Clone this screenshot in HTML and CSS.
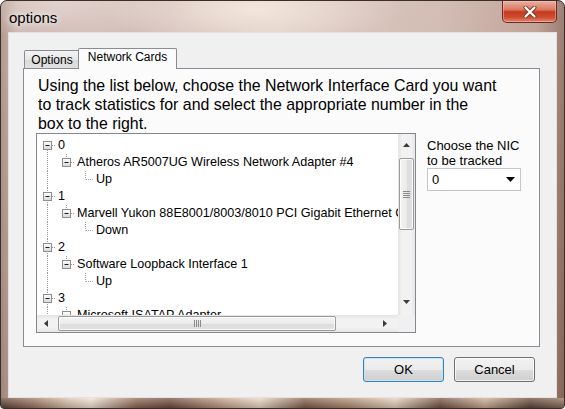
FILE: index.html
```html
<!DOCTYPE html>
<html lang="en">

<head>
    <meta charset="UTF-8">
    <title>options</title>
    <link rel="stylesheet" href="styles.css">
</head>

<body>
    <!-- tree line pieces, reused by every row -->
    <svg class="defs" width="0" height="0">
        <defs>
            <linearGradient id="box-fill" x1="0" y1="0" x2="0" y2="1">
                <stop offset="0" stop-color="#ffffff"/>
                <stop offset="1" stop-color="#d6d6d6"/>
            </linearGradient>
            <symbol id="box" viewBox="0 0 19 17">
                <rect x="6.5" y="4.5" width="8" height="8" fill="url(#box-fill)" stroke="#8c8e91"/>
                <path d="M8.5 8.5h4" stroke="#1f1f1f"/>
            </symbol>
            <symbol id="v" viewBox="0 0 19 17">
                <path class="dots" d="M10.5 0V17"/>
            </symbol>
            <symbol id="l" viewBox="0 0 19 17">
                <path class="dots" d="M10.5 0V8.5M11 8.5H19"/>
            </symbol>
            <symbol id="first" viewBox="0 0 19 17">
                <path class="dots" d="M10.5 9V17M11 8.5H19"/>
                <use href="#box"/>
            </symbol>
            <symbol id="tee" viewBox="0 0 19 17">
                <path class="dots" d="M10.5 0V17M11 8.5H19"/>
                <use href="#box"/>
            </symbol>
            <symbol id="last" viewBox="0 0 19 17">
                <path class="dots" d="M10.5 0V8.5M11 8.5H19"/>
                <use href="#box"/>
            </symbol>
        </defs>
    </svg>

    <div class="window">
        <div class="titlebar">
            <div class="title">options</div>
            <div class="close">
                <svg width="14" height="12" viewBox="0 0 14 12">
                    <path d="M2.5 1.5L11.5 10.5M11.5 1.5L2.5 10.5" stroke="#7a3a2e" stroke-width="4" stroke-linecap="round"/>
                    <path d="M2.5 1.5L11.5 10.5M11.5 1.5L2.5 10.5" stroke="#ffffff" stroke-width="2.2" stroke-linecap="round"/>
                </svg>
            </div>
        </div>

        <div class="client">
            <div class="tabs">
                <div class="tab">Options</div>
                <div class="tab active">Network Cards</div>
            </div>

            <div class="panel">
                <p class="intro">
                    Using the list below, choose the Network Interface Card you want<br>
                    to track statistics for and select the appropriate number in the<br>
                    box to the right.
                </p>

                <div class="nic-row">
                    <div class="tree">
                        <div class="tree-items">
                            <div class="node"><svg class="gl"><use href="#first"/></svg><span class="label">0</span></div>
                            <div class="node"><svg class="gl"><use href="#v"/></svg><svg class="gl"><use href="#last"/></svg><span class="label">Atheros AR5007UG Wireless Network Adapter #4</span></div>
                            <div class="node"><svg class="gl"><use href="#v"/></svg><span class="gap"></span><svg class="gl"><use href="#l"/></svg><span class="label">Up</span></div>
                            <div class="node"><svg class="gl"><use href="#tee"/></svg><span class="label">1</span></div>
                            <div class="node"><svg class="gl"><use href="#v"/></svg><svg class="gl"><use href="#last"/></svg><span class="label">Marvell Yukon 88E8001/8003/8010 PCI Gigabit Ethernet Controller</span></div>
                            <div class="node"><svg class="gl"><use href="#v"/></svg><span class="gap"></span><svg class="gl"><use href="#l"/></svg><span class="label">Down</span></div>
                            <div class="node"><svg class="gl"><use href="#tee"/></svg><span class="label">2</span></div>
                            <div class="node"><svg class="gl"><use href="#v"/></svg><svg class="gl"><use href="#last"/></svg><span class="label">Software Loopback Interface 1</span></div>
                            <div class="node"><svg class="gl"><use href="#v"/></svg><span class="gap"></span><svg class="gl"><use href="#l"/></svg><span class="label">Up</span></div>
                            <div class="node"><svg class="gl"><use href="#tee"/></svg><span class="label">3</span></div>
                            <div class="node"><svg class="gl"><use href="#v"/></svg><svg class="gl"><use href="#last"/></svg><span class="label">Microsoft ISATAP Adapter</span></div>
                        </div>

                        <div class="vscroll">
                            <div class="sb-btn up">
                                <svg width="7" height="4" viewBox="0 0 7 4"><path d="M0 4L3.5 0L7 4z"/></svg>
                            </div>
                            <div class="thumb">
                                <svg width="7" height="7" viewBox="0 0 7 7"><path d="M0 0.5h7M0 2.5h7M0 4.5h7M0 6.5h7"/></svg>
                            </div>
                            <div class="track"></div>
                            <div class="sb-btn down">
                                <svg width="7" height="4" viewBox="0 0 7 4"><path d="M0 0L7 0L3.5 4z"/></svg>
                            </div>
                        </div>

                        <div class="hscroll">
                            <div class="sb-btn left">
                                <svg width="4" height="7" viewBox="0 0 4 7"><path d="M4 0L4 7L0 3.5z"/></svg>
                            </div>
                            <div class="thumb">
                                <svg width="7" height="7" viewBox="0 0 7 7"><path d="M0.5 0v7M2.5 0v7M4.5 0v7M6.5 0v7"/></svg>
                            </div>
                            <div class="track"></div>
                            <div class="sb-btn right">
                                <svg width="4" height="7" viewBox="0 0 4 7"><path d="M0 0L4 3.5L0 7z"/></svg>
                            </div>
                        </div>

                        <div class="corner"></div>
                    </div>

                    <div class="nic-pick">
                        <div>Choose the NIC</div>
                        <div>to be tracked</div>
                        <div class="combo">
                            <span>0</span>
                            <svg width="9" height="5" viewBox="0 0 9 5"><path d="M0 0H9L4.5 5z"/></svg>
                        </div>
                    </div>
                </div>
            </div>

            <div class="actions">
                <button class="btn default">OK</button>
                <button class="btn">Cancel</button>
            </div>
        </div>

        <div class="frame-bottom"></div>
    </div>
</body>

</html>
```

FILE: styles.css
```css
html, body {
    margin: 0;
    padding: 0;
    background: #fff;
    font-family: "Liberation Sans", Arial, sans-serif;
    color: #000;
}

.defs {
    position: absolute;
    width: 0;
    height: 0;
    overflow: hidden;
}

.dots {
    fill: none;
    stroke: #9a9a9a;
    stroke-dasharray: 1 1;
}

/* aero glass frame */
.window {
    box-sizing: border-box;
    width: 565px;
    height: 409px;
    display: flex;
    flex-direction: column;
    padding: 0 7px;
    border: 1px solid #3b2d27;
    border-radius: 7px 7px 4px 4px;
    overflow: hidden;
    background:
        radial-gradient(ellipse 150px 40px at 250px 8px, rgba(250, 238, 228, 0.75), transparent),
        radial-gradient(ellipse 110px 40px at 60px 0, rgba(238, 226, 222, 0.6), transparent),
        linear-gradient(to bottom, rgba(255, 255, 255, 0.15), rgba(0, 0, 0, 0.05)),
        linear-gradient(to right, #a88b80 0, #c6aea6 3%, #cdb7b0 30%, #d8c5bd 48%, #ccb2a8 78%, #b8968a 95%, #8c6a5b 100%);
}

.titlebar {
    height: 31px;
    display: flex;
    justify-content: space-between;
    align-items: flex-start;
    flex: none;
}

.title {
    margin: 8px 0 0 1px;
    font-size: 15px;
    line-height: 18px;
    text-shadow: 0 0 6px rgba(255, 255, 255, 0.9), 0 0 10px rgba(255, 255, 255, 0.7);
}

.close {
    box-sizing: border-box;
    width: 55px;
    height: 22px;
    display: flex;
    align-items: center;
    justify-content: center;
    border: 1px solid #6a2c22;
    border-top: none;
    border-radius: 0 0 5px 5px;
    background: linear-gradient(#eab1a4, #db7b63 40%, #c53a1f 52%, #cf4d31 78%, #e28a70);
    box-shadow: inset 0 0 0 1px rgba(255, 200, 190, 0.45);
}

.client {
    flex: 1;
    display: flex;
    flex-direction: column;
    background: #f0f0f0;
    border: 1px solid #e8dfdb;
    padding-top: 15px;
}

/* tab strip */
.tabs {
    display: flex;
    align-items: flex-end;
    height: 20px;
    margin: 0 16px 0 14px;
    padding-left: 1px;
    font-size: 12px;
    flex: none;
}

.tab {
    box-sizing: border-box;
    width: 56px;
    height: 18px;
    padding-top: 1px;
    line-height: 16px;
    text-align: center;
    white-space: nowrap;
    border: 1px solid #898c95;
    border-bottom: none;
    border-radius: 2px 2px 0 0;
    background: linear-gradient(#f3f3f3, #e8e8e8 50%, #dadada 51%, #e0e0e0);
}

.tab.active {
    position: relative;
    z-index: 1;
    width: 99px;
    height: 21px;
    margin: 0 -2px -1px;
    padding-top: 0;
    background: #fbfbfb;
}

.panel {
    box-sizing: border-box;
    height: 279px;
    margin: 0 16px 0 14px;
    padding: 7px 12px 0;
    border: 1px solid #898c95;
    background: #fbfbfb;
    flex: none;
}

.intro {
    margin: 0 0 0 2px;
    font-size: 15.9px;
    line-height: 19px;
    white-space: nowrap;
}

.nic-row {
    display: flex;
    gap: 11px;
}

/* tree view */
.tree {
    box-sizing: border-box;
    width: 380px;
    height: 200px;
    border: 1px solid #828790;
    background: #fff;
    display: grid;
    grid-template-columns: minmax(0, 1fr) 17px;
    grid-template-rows: minmax(0, 1fr) 17px;
    font-size: 12.6px;
}

.tree-items {
    min-width: 0;
    overflow: hidden;
    padding-top: 3px;
}

.node {
    display: flex;
    align-items: center;
    height: 17px;
    white-space: nowrap;
}

.gl {
    width: 19px;
    height: 17px;
    flex: none;
}

.gap {
    width: 19px;
    flex: none;
}

.label {
    padding-left: 2px;
    line-height: 17px;
}

/* scroll bars */
.vscroll {
    display: flex;
    flex-direction: column;
    align-items: center;
    background: linear-gradient(to right, #e4e4e4, #f2f2f2 25%, #f2f2f2 75%, #e6e6e6);
}

.hscroll {
    display: flex;
    align-items: center;
    background: linear-gradient(#e4e4e4, #f2f2f2 25%, #f2f2f2 75%, #e6e6e6);
}

.corner {
    background: #f0f0f0;
}

.sb-btn {
    box-sizing: border-box;
    display: flex;
    align-items: center;
    justify-content: center;
    flex: none;
}

.sb-btn svg {
    fill: #3c3c3c;
}

.sb-btn.up {
    width: 17px;
    height: 22px;
}

.sb-btn.down {
    width: 17px;
    height: 22px;
    padding-bottom: 4px;
}

.sb-btn.left {
    width: 17px;
    height: 17px;
}

.sb-btn.right {
    width: 26px;
    height: 17px;
}

.track {
    flex: 1;
}

.thumb {
    box-sizing: border-box;
    display: flex;
    align-items: center;
    justify-content: center;
    flex: none;
    border: 1px solid #9b9b9b;
    border-radius: 2px;
    box-shadow: inset 0 0 0 1px rgba(255, 255, 255, 0.75);
}

.thumb svg {
    stroke: #8a8a8a;
    fill: none;
}

.vscroll .thumb {
    width: 15px;
    height: 72px;
    margin-top: 2px;
    background: linear-gradient(to right, #f4f4f4, #ebebeb 50%, #dcdcdc 51%, #e2e2e2);
}

.hscroll .thumb {
    width: 278px;
    height: 15px;
    margin-left: 4px;
    background: linear-gradient(#f4f4f4, #ebebeb 50%, #dcdcdc 51%, #e2e2e2);
}

/* NIC picker */
.nic-pick {
    padding-top: 5px;
    font-size: 13px;
    line-height: 15px;
}

.combo {
    box-sizing: border-box;
    width: 94px;
    height: 23px;
    display: flex;
    align-items: center;
    justify-content: space-between;
    padding: 0 5px 0 4px;
    border: 1px solid #c6c6c6;
    background: #fff;
}

/* dialog buttons */
.actions {
    display: flex;
    justify-content: flex-end;
    gap: 10px;
    margin: 10px 21px 0 0;
}

.btn {
    box-sizing: border-box;
    width: 81px;
    height: 25px;
    padding: 0;
    border: 1px solid #707070;
    border-radius: 3px;
    background: linear-gradient(#f2f2f2, #ebebeb 50%, #dddddd 51%, #cfcfcf);
    box-shadow: inset 0 0 0 1px rgba(255, 255, 255, 0.7);
    font-family: "Liberation Sans", Arial, sans-serif;
    font-size: 13px;
    color: #000;
}

.btn.default {
    border-color: #3c7fb1;
    box-shadow: inset 0 0 0 1px #c4e5f6;
}

.frame-bottom {
    height: 10px;
    margin: 0 -7px;
    flex: none;
    background:
        linear-gradient(to bottom, rgba(255, 255, 255, 0.3), rgba(0, 0, 0, 0.2)),
        linear-gradient(to right, #5c3f31, #9b7560 6%, #d8c0a8 12%, #efe1d1 16%, #8a6450 24%, #6a4838 30%, #c4a388 40%, #e8d6c2 46%, #7d5a46 54%, #b08c72 62%, #e3cfb9 70%, #6f4f3e 78%, #c9a98f 86%, #5e4334 94%, #8d6b58);
}
```
